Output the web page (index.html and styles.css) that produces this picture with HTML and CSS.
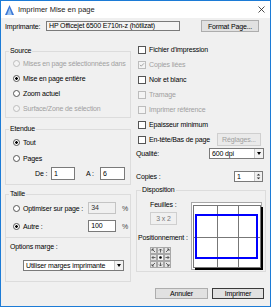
FILE: index.html
```html
<!DOCTYPE html>
<html lang="fr">
<head>
    <meta charset="UTF-8">
    <title>Imprimer Mise en page</title>
    <link rel="stylesheet" href="styles.css">
</head>
<body>
    <div class="window">
        <div class="titlebar">
            <svg class="app-icon" viewBox="0 0 9 10">
                <polygon points="4.5,0 9,10 0,10" fill="#3b78d8"/>
                <polygon points="4.5,3 7,10 2,10" fill="#9cc3f0"/>
            </svg>
            <span class="title">Imprimer Mise en page</span>
            <svg class="close" viewBox="0 0 7 7">
                <path d="M0.5 0.5 L6.5 6.5 M6.5 0.5 L0.5 6.5" stroke="#222" stroke-width="0.8"/>
            </svg>
        </div>

        <div class="body">
            <div class="printer-row">
                <span class="printer-label">Imprimante:</span>
                <div class="field printer-field">HP Officejet 6500 E710n-z (hôtlizat)</div>
                <button class="btn format-btn">Format Page...</button>
            </div>

            <div class="main">
                <!-- colonne gauche -->
                <div class="col-left">
                    <div class="group source">
                        <div class="group-title">Source</div>
                        <div class="opt disabled"><span class="radio"></span>Mises en page sélectionnées dans</div>
                        <div class="opt"><span class="radio checked"></span>Mise en page entière</div>
                        <div class="opt"><span class="radio"></span>Zoom actuel</div>
                        <div class="opt disabled"><span class="radio"></span>Surface/Zone de sélection</div>
                    </div>

                    <div class="group range">
                        <div class="group-title">Etendue</div>
                        <div class="opt tall"><span class="radio checked"></span>Tout</div>
                        <div class="opt tall"><span class="radio"></span>Pages</div>
                        <div class="pages-row">
                            <span class="de-label">De :</span>
                            <div class="field de-field">1</div>
                            <span class="a-label">A :</span>
                            <div class="field a-field">6</div>
                        </div>
                    </div>

                    <div class="group size">
                        <div class="group-title">Taille</div>
                        <div class="size-row">
                            <span class="size-opt"><span class="radio"></span>Optimiser sur page :</span>
                            <div class="field pct-field disabled-field">34</div>
                            <span class="pct">%</span>
                        </div>
                        <div class="size-row">
                            <span class="size-opt"><span class="radio checked"></span>Autre :</span>
                            <div class="field pct-field">100</div>
                            <span class="pct">%</span>
                        </div>
                        <div class="separator"></div>
                        <div class="margin-label">Options marge :</div>
                        <div class="select margin-select">
                            <span class="select-text">Utiliser marges imprimante</span>
                            <span class="select-arrow"></span>
                        </div>
                    </div>
                </div>

                <!-- colonne droite -->
                <div class="col-right">
                    <div class="check-row"><span class="check"></span>Fichier d'impression</div>
                    <div class="check-row disabled">
                        <span class="check">
                            <svg viewBox="0 0 8 8"><path d="M1.3 3.8 L3 5.6 L6.6 1.8" fill="none" stroke="#9a9a9a" stroke-width="1.2"/></svg>
                        </span>Copies liées
                    </div>
                    <div class="check-row"><span class="check"></span>Noir et blanc</div>
                    <div class="check-row disabled"><span class="check"></span>Tramage</div>
                    <div class="check-row disabled"><span class="check"></span>Imprimer référence</div>
                    <div class="check-row"><span class="check"></span>Epaisseur minimum</div>
                    <div class="check-row">
                        <span class="check"></span>En-tête/Bas de page
                        <button class="btn settings-btn" disabled>Réglages...</button>
                    </div>

                    <div class="quality-row">
                        <span>Qualité:</span>
                        <div class="select quality-select">
                            <span class="select-text">600 dpi</span>
                            <span class="select-arrow"></span>
                        </div>
                    </div>

                    <div class="copies-row">
                        <span>Copies :</span>
                        <div class="spin">
                            <span class="spin-text">1</span>
                            <span class="spin-buttons">
                                <svg viewBox="0 0 7 10">
                                    <path d="M1.5 4 L3.5 2 L5.5 4 Z M1.5 6 L3.5 8 L5.5 6 Z" fill="#333"/>
                                </svg>
                            </span>
                        </div>
                    </div>

                    <div class="group layout">
                        <div class="group-title">Disposition</div>
                        <div class="layout-body">
                            <div class="layout-left">
                                <div class="sheets-label">Feuilles :</div>
                                <div class="sheets-box">3 x 2</div>
                                <div class="pos-label">Positionnement :</div>
                                <svg class="pad" viewBox="0 0 21 21">
                                    <g fill="#e4e4e4" stroke="#a8a8a8" stroke-width="1">
                                        <rect x="0.5" y="0.5" width="6" height="6"/>
                                        <rect x="7.5" y="0.5" width="6" height="6"/>
                                        <rect x="14.5" y="0.5" width="6" height="6"/>
                                        <rect x="0.5" y="7.5" width="6" height="6"/>
                                        <rect x="7.5" y="7.5" width="6" height="6" fill="#fafafa"/>
                                        <rect x="14.5" y="7.5" width="6" height="6"/>
                                        <rect x="0.5" y="14.5" width="6" height="6"/>
                                        <rect x="7.5" y="14.5" width="6" height="6"/>
                                        <rect x="14.5" y="14.5" width="6" height="6"/>
                                    </g>
                                    <g stroke="#444" stroke-width="0.8" fill="none">
                                        <path d="M5 5 L2 2 M2 4 L2 2 L4 2"/>
                                        <path d="M10.5 5.5 L10.5 2 M9 3.5 L10.5 2 L12 3.5"/>
                                        <path d="M16 5 L19 2 M17 2 L19 2 L19 4"/>
                                        <path d="M5.5 10.5 L2 10.5 M3.5 9 L2 10.5 L3.5 12"/>
                                        <path d="M15.5 10.5 L19 10.5 M17.5 9 L19 10.5 L17.5 12"/>
                                        <path d="M5 16 L2 19 M2 17 L2 19 L4 19"/>
                                        <path d="M10.5 15.5 L10.5 19 M9 17.5 L10.5 19 L12 17.5"/>
                                        <path d="M16 16 L19 19 M17 19 L19 19 L19 17"/>
                                    </g>
                                    <circle cx="10.5" cy="10.5" r="1.3" fill="#000"/>
                                </svg>
                            </div>
                            <div class="preview">
                                <div class="page">
                                    <div class="cell"></div><div class="cell"></div><div class="cell"></div>
                                    <div class="cell"></div><div class="cell"></div><div class="cell"></div>
                                    <div class="print-area"></div>
                                </div>
                            </div>
                        </div>
                    </div>
                </div>
            </div>

            <div class="footer">
                <button class="btn cancel-btn">Annuler</button>
                <button class="btn print-btn">Imprimer</button>
            </div>
        </div>
    </div>
</body>
</html>
```

FILE: styles.css
```css
* {
    box-sizing: border-box;
}
body {
    margin: 0;
    font-family: "Liberation Sans", Arial, sans-serif;
    font-size: 7px;
    letter-spacing: -0.15px;
    color: #000;
    background: #fff;
}
.window {
    width: 271px;
    height: 307px;
    border: 1px solid #1c7bd6;
    background: #f0f0f0;
    display: flex;
    flex-direction: column;
}
.titlebar {
    height: 17px;
    background: #fff;
    display: flex;
    align-items: center;
    padding: 0 5px 0 4px;
}
.app-icon {
    width: 9px;
    height: 10px;
    margin-right: 4px;
}
.title {
    flex: 1;
    font-size: 7.5px;
    letter-spacing: 0;
    color: #222;
}
.close {
    width: 7px;
    height: 7px;
}
.body {
    flex: 1;
    padding: 2px 4px 0 4px;
}

/* ligne imprimante */
.printer-row {
    display: flex;
    align-items: center;
    height: 12px;
}
.printer-label {
    width: 41px;
}
.field {
    background: #fff;
    border: 1px solid #7a7a7a;
    padding: 0 2px;
    line-height: 9px;
    height: 11px;
    white-space: nowrap;
    overflow: hidden;
}
.printer-field {
    width: 134px;
    height: 10px;
    line-height: 8px;
    background: #f4f4f4;
}
.btn {
    font-family: inherit;
    font-size: 7px;
    letter-spacing: -0.15px;
    color: #000;
    background: #e1e1e1;
    border: 1px solid #adadad;
    padding: 0;
    margin: 0;
}
.btn:disabled {
    color: #a0a0a0;
    background: #eaeaea;
    border-color: #cfcfcf;
}
.format-btn {
    width: 58px;
    height: 12px;
    margin-left: auto;
    margin-right: 7px;
}

.main {
    display: flex;
    gap: 5px;
    margin-top: 10px;
}
.col-left {
    width: 126px;
}
.col-right {
    width: 130px;
}

/* cadres */
.group {
    border: 1px solid #dcdcdc;
    padding: 0 2px 1px 7px;
}
.group-title {
    display: table;
    background: #f0f0f0;
    height: 10px;
    line-height: 10px;
    margin: -6px 0 0 -4px;
    padding: 0 1px;
}
.source {
    margin-top: 9px;
}
.range {
    margin-top: 11px;
    padding-bottom: 3px;
}
.size {
    margin-top: 9px;
    padding-top: 2px;
    padding-bottom: 10px;
}
.size .group-title {
    margin-top: -8px;
}

.opt {
    display: flex;
    align-items: center;
    height: 15px;
    white-space: nowrap;
    overflow: hidden;
}
.opt.tall {
    height: 16px;
}
.disabled {
    color: #a0a0a0;
}
.radio {
    flex: none;
    width: 7px;
    height: 7px;
    border: 1px solid #555;
    border-radius: 50%;
    background: #fff;
    margin-right: 3px;
}
.radio.checked {
    background: radial-gradient(circle, #000 0, #000 1.2px, #fff 1.5px);
}
.disabled .radio {
    border-color: #bcbcbc;
    background: #f4f4f4;
}

.pages-row {
    display: flex;
    align-items: center;
    height: 15px;
}
.de-label {
    margin-left: 22px;
    width: 16px;
}
.de-field {
    width: 24px;
    height: 13px;
    line-height: 11px;
}
.a-label {
    margin-left: 11px;
    width: 14px;
}
.a-field {
    width: 25px;
    height: 13px;
    line-height: 11px;
}

.size-row {
    display: flex;
    align-items: center;
    height: 18px;
}
.size-opt {
    display: flex;
    align-items: center;
    width: 76px;
}
.pct-field {
    width: 28px;
    height: 12px;
    line-height: 10px;
}
.disabled-field {
    background: #f0f0f0;
    border-color: #c4c4c4;
    color: #333;
}
.pct {
    margin-left: 6px;
    color: #444;
}
.separator {
    height: 1px;
    background: #dcdcdc;
    margin: 2px -2px 0 -7px;
}
.margin-label {
    height: 10px;
    line-height: 10px;
    margin: 4px 0 0 -3px;
}

.select {
    display: flex;
    align-items: stretch;
    height: 11px;
    background: #fff;
    border: 1px solid #7a7a7a;
}
.select-text {
    flex: 1;
    padding-left: 2px;
    line-height: 9px;
    white-space: nowrap;
    overflow: hidden;
}
.select-arrow {
    width: 9px;
    border-left: 1px solid #c8c8c8;
    background: #f2f2f2;
    position: relative;
}
.select-arrow::after {
    content: "";
    position: absolute;
    left: 2px;
    top: 3px;
    border-left: 2px solid transparent;
    border-right: 2px solid transparent;
    border-top: 3px solid #000;
}
.margin-select {
    width: 101px;
    margin: 8px 0 0 10px;
}

/* colonne droite */
.check-row {
    display: flex;
    align-items: center;
    height: 15px;
    padding-left: 2px;
    white-space: nowrap;
}
.check {
    flex: none;
    width: 8px;
    height: 8px;
    border: 1px solid #555;
    background: #fff;
    margin-right: 3px;
    display: flex;
}
.check svg {
    width: 6px;
    height: 6px;
}
.disabled .check {
    border-color: #bcbcbc;
    background: #f4f4f4;
}
.settings-btn {
    width: 44px;
    height: 13px;
    margin-left: auto;
    margin-right: 5px;
}
.quality-row {
    display: flex;
    align-items: center;
    justify-content: space-between;
    height: 12px;
}
.quality-select {
    width: 55px;
    margin-right: 2px;
}
.copies-row {
    display: flex;
    align-items: center;
    justify-content: space-between;
    height: 12px;
    margin-top: 11px;
}
.spin {
    display: flex;
    width: 29px;
    height: 11px;
    margin-right: 3px;
    background: #fff;
    border: 1px solid #7a7a7a;
}
.spin-text {
    flex: 1;
    padding-left: 2px;
    line-height: 9px;
}
.spin-buttons {
    width: 8px;
    background: #f0f0f0;
    border-left: 1px solid #c8c8c8;
    display: flex;
}
.spin-buttons svg {
    width: 7px;
    height: 9px;
}

/* disposition */
.layout {
    margin-top: 8px;
    padding: 0 3px 1px 0;
}
.layout .group-title {
    margin-left: 4px;
}
.layout-body {
    display: flex;
}
.layout-left {
    width: 54px;
}
.sheets-label {
    margin: 5px 0 0 13px;
    height: 10px;
    line-height: 10px;
}
.sheets-box {
    width: 27px;
    height: 13px;
    line-height: 11px;
    margin: 2px 0 0 13px;
    border: 1px solid #cfcfcf;
    color: #777;
    text-align: center;
}
.pos-label {
    height: 10px;
    line-height: 10px;
    margin-top: 8px;
    margin-left: 1px;
    white-space: nowrap;
}
.pad {
    display: block;
    width: 21px;
    height: 21px;
    margin: 4px 0 0 13px;
}
.preview {
    width: 71px;
    height: 68px;
    margin-top: 7px;
    background: #fff;
    border: 1px solid #a8a8a8;
    padding: 2px 0 0 1px;
}
.page {
    position: relative;
    width: 68px;
    height: 63px;
    border: 1px solid #777;
    background: #777;
    display: grid;
    grid-template-columns: 23px 20px 21px;
    grid-template-rows: 31px 29px;
    gap: 1px;
    box-shadow: 2px 2px 0 #000;
}
.cell {
    background: #fff;
}
.print-area {
    position: absolute;
    left: 1px;
    top: 8px;
    width: 63px;
    height: 45px;
    border: 2px solid #0000ff;
}

/* boutons du bas */
.footer {
    display: flex;
    justify-content: flex-end;
    gap: 4px;
    margin-top: 6px;
    padding-right: 2px;
}
.cancel-btn {
    width: 53px;
    height: 11px;
}
.print-btn {
    width: 52px;
    height: 11px;
    border-color: #3a3a3a;
    box-shadow: inset 0 0 0 1px #e1e1e1;
}
```
